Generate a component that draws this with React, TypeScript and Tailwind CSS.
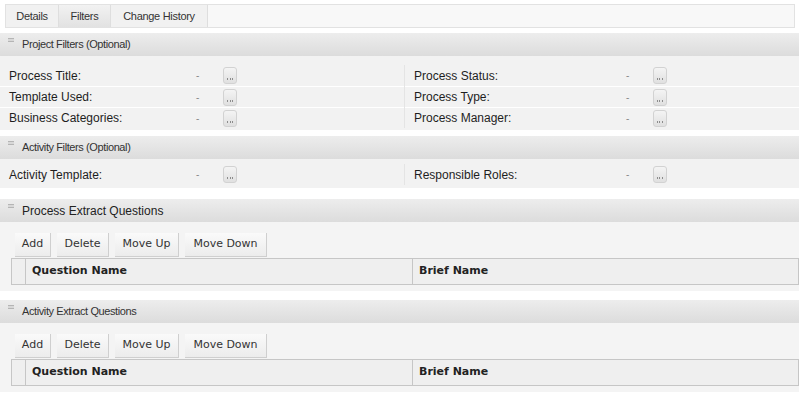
import React from 'react'

const TABS = [
  { label: 'Details', active: false, w: 'w-[53px]' },
  { label: 'Filters', active: true, w: 'w-[52px]' },
  { label: 'Change History', active: false, w: 'w-[97px]' },
]

function Minus() {
  return <span className="absolute left-[8px] top-[5px] block h-[4px] w-[6px] border-t border-b border-[#b5b5b5] bg-[#d8d8d8]" />
}

function SectionHeader({ title, small }: { title: string; small?: boolean }) {
  return (
    <div className="relative flex h-[23px] items-center bg-gradient-to-b from-[#ededed] to-[#dcdcdc] pl-[22px]">
      <Minus />
      <span
        className={
          small
            ? 'text-[11px] tracking-[-0.4px] text-[#333]'
            : 'text-[12px] text-[#222]'
        }
      >
        {title}
      </span>
    </div>
  )
}

function Picker() {
  return (
    <span className="flex h-[17px] w-[14px] items-end justify-center rounded-[3px] border border-[#d2d2d2] bg-gradient-to-b from-[#f4f4f4] to-[#e0e0e0] pb-[3px]">
      <span className="block h-[2px] w-[6px] bg-[linear-gradient(90deg,#8c8c8c_0_1px,transparent_1px_2.5px,#8c8c8c_2.5px_3.5px,transparent_3.5px_5px,#8c8c8c_5px_6px)]" />
    </span>
  )
}

function FilterBlock({ left, right }: { left: string[]; right: string[] }) {
  return (
    <div className="flex bg-[#f2f2f2]">
      <div className="w-[404px]">
        {left.map((l, i) => (
          <div key={l} className={`flex h-[21px] items-center ${i === 0 ? '' : 'border-t border-white'}`}>
            <span className="w-[196px] pl-[9px] text-[12px] text-[#1e1e1e]">{l}</span>
            <span className="w-[27px] text-[10px] text-[#888]">-</span>
            <Picker />
          </div>
        ))}
      </div>
      <div className="flex-1 border-l border-[#e4e4e4]">
        {right.map((l, i) => (
          <div key={l} className={`flex h-[21px] items-center ${i === 0 ? '' : 'border-t border-white'}`}>
            <span className="w-[221px] pl-[9px] text-[12px] text-[#1e1e1e]">{l}</span>
            <span className="w-[27px] text-[10px] text-[#888]">-</span>
            <Picker />
          </div>
        ))}
      </div>
    </div>
  )
}

function ToolButton({ label, w }: { label: string; w: string }) {
  return (
    <span
      className={`flex h-[24px] ${w} items-center justify-center border-r border-b border-[#cfcfcf] bg-gradient-to-b from-[#fafafa] to-[#ececec] text-[11px] text-[#333]`}
      style={{ fontFamily: '"DejaVu Sans", Verdana, sans-serif' }}
    >
      {label}
    </span>
  )
}

function QuestionsBlock({ title, small, mt }: { title: string; small?: boolean; mt: string }) {
  return (
    <div className={mt}>
      <SectionHeader title={title} small={small} />
      <div className="bg-[#f4f4f4] pb-[6px] pl-[11px] pt-[11px]">
        <div className="flex gap-[6px] pl-[4px]">
          <ToolButton label="Add" w="w-[36px]" />
          <ToolButton label="Delete" w="w-[52px]" />
          <ToolButton label="Move Up" w="w-[64px]" />
          <ToolButton label="Move Down" w="w-[82px]" />
        </div>
        <div
          className="mt-[1px] flex h-[27px] border border-[#c6c6c6] bg-[#efefef] text-[11px] font-bold text-[#222]"
          style={{ fontFamily: '"DejaVu Sans", Verdana, sans-serif' }}
        >
          <span className="w-[14px] border-r border-[#c6c6c6]" />
          <span className="flex w-[387px] items-center border-r border-[#c6c6c6] pl-[6px]">Question Name</span>
          <span className="flex flex-1 items-center pl-[6px]">Brief Name</span>
        </div>
      </div>
    </div>
  )
}

export default function App() {
  return (
    <div
      className="h-[393px] w-[799px] overflow-hidden bg-white pt-[4px]"
      style={{ fontFamily: '"Liberation Sans", Arial, sans-serif' }}
    >
      {/* Tabs */}
      <div className="ml-[5px] mr-[4px] flex h-[24px] border border-[#e2e2e2] bg-[#f8f8f8]">
        {TABS.map((t) => (
          <span
            key={t.label}
            className={`flex ${t.w} items-center justify-center border-r border-[#dedede] text-[11px] tracking-[-0.3px] text-[#333] ${
              t.active ? 'bg-gradient-to-b from-[#f2f2f2] to-[#e2e2e2]' : 'bg-[#f1f1f1]'
            }`}
          >
            {t.label}
          </span>
        ))}
      </div>

      {/* Project filters */}
      <div className="mt-[5px]">
        <SectionHeader title="Project Filters (Optional)" small />
        <div className="bg-[#f2f2f2] pb-[2px] pt-[9px]">
          <FilterBlock
            left={['Process Title:', 'Template Used:', 'Business Categories:']}
            right={['Process Status:', 'Process Type:', 'Process Manager:']}
          />
        </div>
      </div>

      {/* Activity filters */}
      <div className="mt-[6px]">
        <SectionHeader title="Activity Filters (Optional)" small />
        <div className="bg-[#f2f2f2] pb-[3px] pt-[5px]">
          <FilterBlock left={['Activity Template:']} right={['Responsible Roles:']} />
        </div>
      </div>

      <QuestionsBlock title="Process Extract Questions" mt="mt-[11px]" />
      <QuestionsBlock title="Activity  Extract Questions" small mt="mt-[9px]" />
    </div>
  )
}
